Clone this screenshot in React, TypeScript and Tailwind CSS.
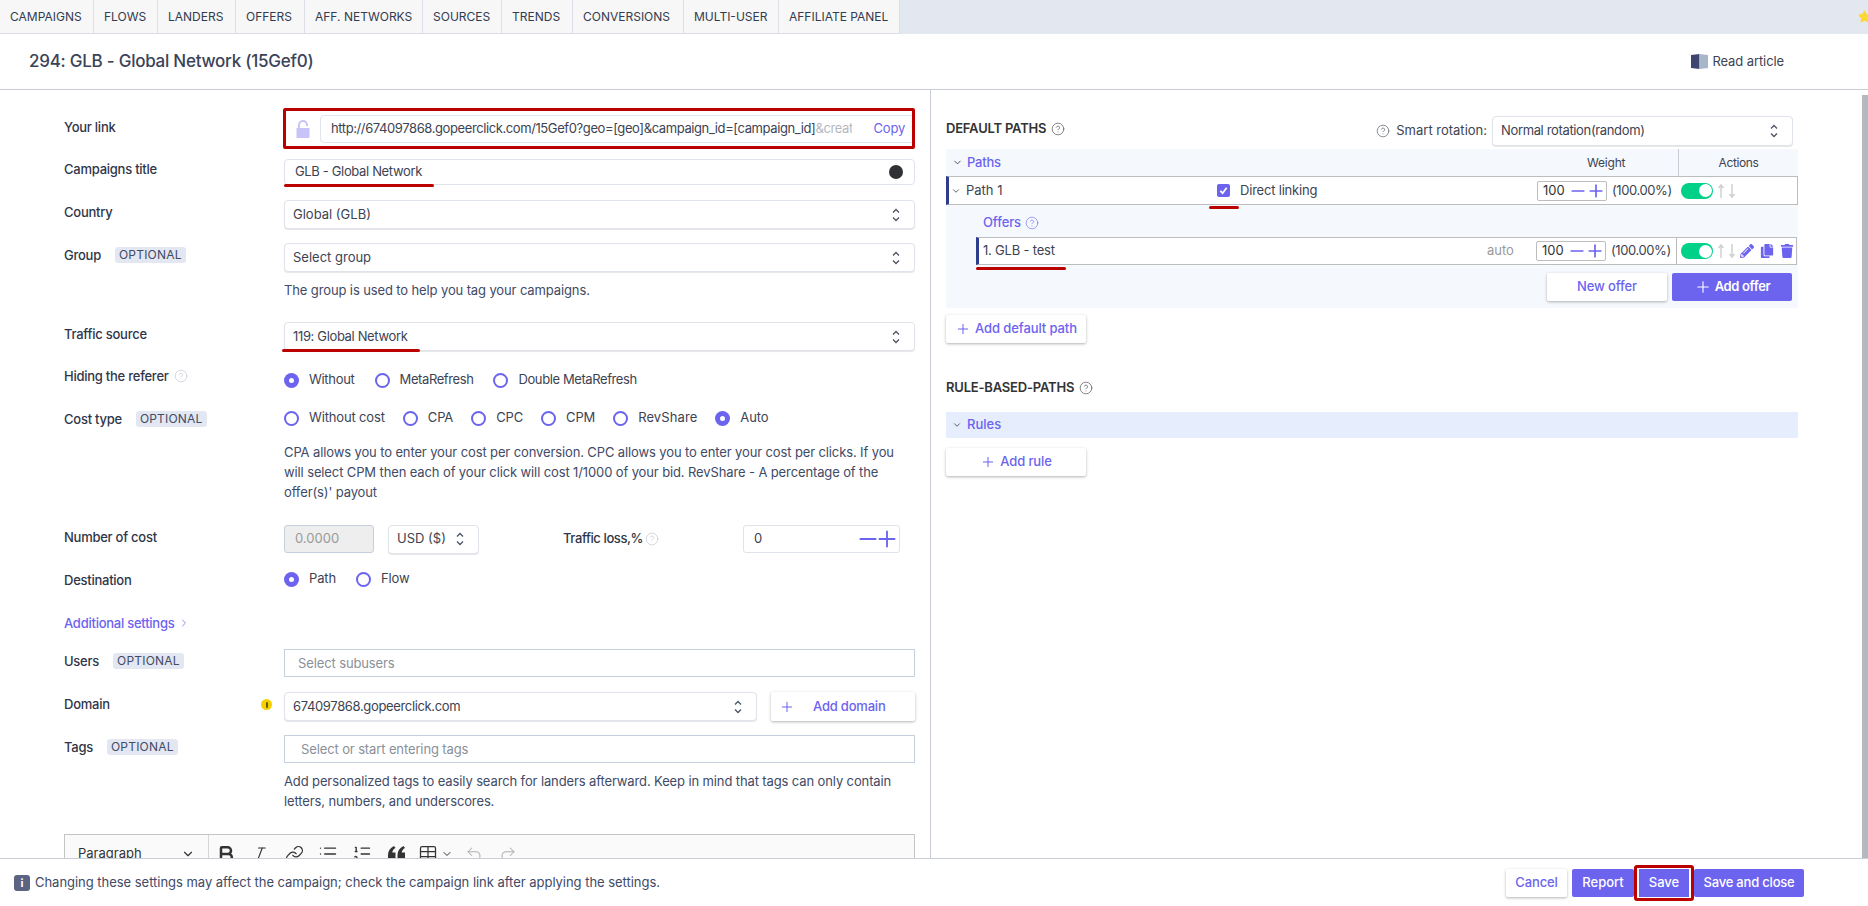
import React from "react";
import {
  Bold,
  ChevronDown,
  ChevronRight,
  CircleHelp,
  Italic,
  Link,
  List,
  ListOrdered,
  Plus,
  Minus,
  Redo2,
  Table,
  Undo2,
} from "lucide-react";
import { FaCopy, FaPencilAlt, FaStar, FaTrash } from "react-icons/fa";

const tabs = [
  ["CAMPAIGNS", "w-[94px]"],
  ["FLOWS", "w-[64px]"],
  ["LANDERS", "w-[78px]"],
  ["OFFERS", "w-[69px]"],
  ["AFF. NETWORKS", "w-[118px]"],
  ["SOURCES", "w-[79px]"],
  ["TRENDS", "w-[71px]"],
  ["CONVERSIONS", "w-[111px]"],
  ["MULTI-USER", "w-[95px]"],
  ["AFFILIATE PANEL", "w-[121px]"],
];

function UpDown() {
  return (
    <svg width="10" height="16" viewBox="0 0 10 16" fill="none" stroke="#4b5563" strokeWidth="1.3" className="shrink-0">
      <path d="M2 5.5 5 2.5 8 5.5" />
      <path d="M2 10.5 5 13.5 8 10.5" />
    </svg>
  );
}

function Optional() {
  return (
    <span className="bg-[#e3e7f1] text-[#414a66] text-[12px] leading-[16px] rounded-[3px] px-[4px] tracking-[0.2px] font-normal">
      OPTIONAL
    </span>
  );
}

function Row({ label, badge, help, children, className, labelClass }: { label: string; badge?: boolean; help?: boolean; children: React.ReactNode; className?: string; labelClass?: string }) {
  return (
    <div className={"flex items-start " + (className ?? "")}>
      <div className={"w-[220px] shrink-0 flex items-center gap-[14px] text-[13px] leading-[20px] text-[#2f3648] font-medium tracking-[-0.25px] " + (labelClass ?? "mt-[2px]")}>
        <span>{label}</span>
        {badge && <Optional />}
        {help && <CircleHelp size={14} strokeWidth={1} className="text-[#b9bec9] -ml-[9px]" />}
      </div>
      <div className="flex-1 min-w-0">{children}</div>
    </div>
  );
}

function Select({ text, className, tight }: { text: string; className?: string; tight?: boolean }) {
  return (
    <div className={"h-[29px] border border-[#dfe3ea] rounded-[4px] shadow-[0_1px_1px_rgba(0,0,0,0.1)] bg-white flex items-center justify-between pl-[8px] pr-[13px] text-[13px] text-[#3d4352] " + (className ?? "")}>
      <span className={tight ? "tracking-[-0.35px]" : ""}>{text}</span>
      <UpDown />
    </div>
  );
}

function Radio({ label, on, spacing }: { label: string; on?: boolean; spacing?: string }) {
  return (
    <div className="flex items-center gap-[10px] text-[13px] text-[#3d4352]">
      <span className={on ? "w-[15px] h-[15px] rounded-full bg-[#6c63ef] flex items-center justify-center" : "w-[15px] h-[15px] rounded-full border-2 border-[#6c63ef] bg-white"}>
        {on && <span className="w-[5px] h-[5px] rounded-full bg-white" />}
      </span>
      <span className={spacing ?? "tracking-[-0.15px]"}>{label}</span>
    </div>
  );
}

function Stepper({ value }: { value: string }) {
  return (
    <div className="w-[70px] h-[20px] border border-[#bdbdbd] rounded-[2px] bg-white flex items-center pl-[5px] text-[13px] text-[#333]">
      <span className="flex-1">{value}</span>
      <Minus size={20} strokeWidth={2} className="text-[#6c63ef]" />
      <Plus size={20} strokeWidth={2} className="text-[#6c63ef] -ml-[2px]" />
    </div>
  );
}

function Toggle() {
  return (
    <span className="w-[32px] h-[16px] rounded-full bg-[#00d188] flex items-center justify-end pr-[1px] shrink-0">
      <span className="w-[13px] h-[13px] rounded-full bg-white" />
    </span>
  );
}

function Arrows() {
  return (
    <span className="flex items-center ml-[4px] gap-[3px] shrink-0">
      <svg width="8" height="16" viewBox="0 0 8 16" fill="none" stroke="#cfd1d4" strokeWidth="1.5">
        <path d="M4 15V2M1.5 5 4 2 6.500 5" />
      </svg>
      <svg width="8" height="16" viewBox="0 0 8 16" fill="none" stroke="#cfd1d4" strokeWidth="1.5">
        <path d="M4 1V14M1.500 11 4 14 6.500 11" />
      </svg>
    </span>
  );
}

function OutlineButton({ children, className }: { children: React.ReactNode; className?: string }) {
  return (
    <button className={"h-[28px] bg-white rounded-[2px] shadow-[0_1px_3px_rgba(0,0,0,0.3)] flex items-center justify-center text-[13px] font-medium text-[#6c63ef] tracking-[-0.1px] " + (className ?? "")}>
      {children}
    </button>
  );
}

export default function App() {
  return (
    <div className="h-[906px] w-[1868px] overflow-hidden flex flex-col bg-white font-['Inter',sans-serif] relative">
      {/* top nav */}
      <div className="h-[34px] shrink-0 bg-[#e2e7f0] flex relative">
        {tabs.map(([name, w]) => (
          <div key={name} className={w + " h-[34px] bg-[#f7f7f7] border-r border-b border-[#dcdfe5] flex items-center pl-[10px] text-[12px] text-[#333b4f] whitespace-nowrap"}>
            {name}
          </div>
        ))}
        <FaStar size={13} className="absolute right-[-3px] top-[10px] text-[#fdd835]" />
      </div>

      {/* title */}
      <div className="h-[56px] shrink-0 border-b border-[#c9ced6] flex items-center justify-between pl-[29px] pr-[84px]">
        <h1 className="text-[17px] font-medium text-[#3a4358] tracking-[-0.25px]">294: GLB - Global Network (15Gef0)</h1>
        <div className="flex items-center gap-[4px] text-[13px] text-[#3d4352] tracking-[-0.1px]">
          <svg width="17" height="15" viewBox="0 0 17 15">
            <path d="M0 1 8.5 0V15L0 14Z" fill="#3f4571" />
            <path d="M8.5 0 17 1V14L8.5 15Z" fill="#a9b5c8" />
          </svg>
          Read article
        </div>
      </div>

      {/* body */}
      <div className="flex-1 min-h-0 flex">
        <div className="w-[930px] shrink-0 overflow-hidden pl-[64px] pr-[15px] pt-[18px]">
          <Row label="Your link" className="mb-[10px]" labelClass="mt-[9px]">
            <div className="h-[41px] flex items-center relative pl-[12px]">
              <svg width="14" height="18" viewBox="0 0 14 18" className="shrink-0">
                <path d="M3 8V5a4 4 0 0 1 8 0v1" fill="none" stroke="#c7c4fa" strokeWidth="2" />
                <rect x="0.5" y="8" width="13" height="10" fill="#c7c4fa" />
              </svg>
              <div className="ml-[10px] flex-1 h-[28px] border border-[#dfe6ef] rounded-[4px] flex items-center pl-[10px] pr-[9px] text-[13px] text-[#3d4352] overflow-hidden">
                <span className="whitespace-nowrap w-[521px] overflow-hidden tracking-[-0.4px]">http://674097868.gopeerclick.com/15Gef0?geo=[geo]&amp;campaign_id=[campaign_id]<span className="text-[#b5b8bf]">&amp;creat</span></span>
                <span className="ml-auto text-[#6c63ef] tracking-[-0.2px]">Copy</span>
              </div>
              <div className="absolute -left-[1px] right-0 top-0 bottom-0 border-[3px] border-[#bb0000] rounded-[2px]" />
            </div>
          </Row>
          <Row label="Campaigns title" className="mb-[15px]" labelClass="mt-0">
            <div className="h-[26px] border border-[#dfe3ea] rounded-[4px] flex items-center justify-between pl-[10px] pr-[11px] text-[13px] text-[#3d4352] relative">
              <span className="tracking-[-0.35px]">GLB - Global Network</span>
              <span className="w-[14px] h-[14px] rounded-full bg-[#2f3136]" />
              <span className="absolute -left-[1px] -bottom-[3px] w-[150px] h-[3px] rounded-full bg-[#bb0000]" />
            </div>
          </Row>
          <Row label="Country" className="mb-[14px]">
            <Select text="Global (GLB)" />
          </Row>
          <Row label="Group" badge className="mb-[22px]">
            <Select text="Select group" />
            <p className="text-[13px] leading-[20px] text-[#414a66] mt-[8px] tracking-[-0.12px]">The group is used to help you tag your campaigns.</p>
          </Row>
          <Row label="Traffic source" className="mb-[19px]">
            <div className="relative">
              <Select text="119: Global Network" tight />
              <span className="absolute -left-[2px] -bottom-[1px] w-[138px] h-[3px] rounded-full bg-[#bb0000]" />
            </div>
          </Row>
          <Row label="Hiding the referer" help className="mb-[18px]" labelClass="-mt-[4px]">
            <div className="flex gap-[20px] h-[20px] items-center">
              <Radio label="Without" on spacing="tracking-[-0.3px]" />
              <Radio label="MetaRefresh" spacing="tracking-[-0.4px]" />
              <Radio label="Double MetaRefresh" spacing="tracking-[-0.4px]" />
            </div>
          </Row>
          <Row label="Cost type" badge className="mb-[23px]" labelClass="mt-[1px]">
            <div className="flex gap-[18px] h-[20px] items-center">
              <Radio label="Without cost" on={false} />
              <Radio label="CPA" />
              <Radio label="CPC" />
              <Radio label="CPM" />
              <Radio label="RevShare" spacing="tracking-[0.1px]" />
              <Radio label="Auto" on />
            </div>
            <p className="text-[13px] leading-[20px] text-[#414a66] mt-[14px] tracking-[-0.12px]">
              CPA allows you to enter your cost per conversion. CPC allows you to enter your cost per clicks. If you will select CPM then each of your click will cost 1/1000 of your bid. RevShare - A percentage of the offer(s)' payout
            </p>
          </Row>
          <Row label="Number of cost" className="mb-[16px]">
            <div className="flex items-center h-[28px]">
              <div className="w-[90px] h-[28px] bg-[#eeeeee] border border-[#c5d0df] rounded-[3px] flex items-center pl-[10px] text-[13px] text-[#9a9a9a]">0.0000</div>
              <Select text="USD ($)" className="w-[91px] ml-[14px] pr-[5px]" />
              <span className="ml-[84px] w-[81px] whitespace-nowrap text-[13px] font-medium text-[#2f3648] tracking-[-0.4px]">Traffic loss,%</span>
              <CircleHelp size={14} strokeWidth={1} className="text-[#b9bec9] ml-[1px]" />
              <div className="w-[157px] h-[28px] ml-[84px] border border-[#dfe3ea] rounded-[3px] flex items-center pl-[10px] text-[13px] text-[#3d4352]">
                <span className="flex-1">0</span>
                <Minus size={26} strokeWidth={1.7} className="text-[#6c63ef] -mr-[7px]" />
                <Plus size={26} strokeWidth={1.7} className="text-[#6c63ef] -mr-[1px]" />
              </div>
            </div>
          </Row>
          <Row label="Destination" className="mb-[23px]" labelClass="mt-[1px]">
            <div className="flex gap-[20px] h-[20px] items-center">
              <Radio label="Path" on />
              <Radio label="Flow" />
            </div>
          </Row>
          <div className="flex items-center gap-[3px] text-[13px] leading-[20px] text-[#6c63ef] font-medium tracking-[-0.25px] mb-[16px]">
            Additional settings <ChevronRight size={12} strokeWidth={1.5} />
          </div>
          <Row label="Users" badge className="mb-[15px]">
            <div className="h-[28px] border border-[#c5d0df] flex items-center pl-[13px] pt-[1px] text-[13px] text-[#8a8f99] tracking-[-0.12px]">Select subusers</div>
          </Row>
          <Row label="Domain" className="mb-[14px] relative" labelClass="mt-[2px]">
            <span className="absolute left-[197px] top-[7px] w-[11px] h-[11px] rounded-full bg-[#f5d000] flex items-center justify-center">
              <span className="w-[2px] h-[6px] rounded-full bg-[#6b5c00]" />
            </span>
            <div className="flex gap-[14px]">
              <Select text="674097868.gopeerclick.com" className="flex-1" tight />
              <OutlineButton className="w-[144px] h-[29px] justify-start pl-[8px] shadow-[0_1px_2px_rgba(0,0,0,0.2)]">
                <Plus size={16} strokeWidth={1.5} />
                <span className="ml-[18px] tracking-[-0.2px]">Add domain</span>
              </OutlineButton>
            </div>
          </Row>
          <Row label="Tags" badge className="mb-[23px]">
            <div className="h-[28px] border border-[#c5d0df] flex items-center pl-[16px] pt-[1px] text-[13px] text-[#8a8f99] tracking-[-0.12px]">Select or start entering tags</div>
            <p className="text-[13px] leading-[20px] text-[#414a66] mt-[8px] tracking-[-0.12px]">
              Add personalized tags to easily search for landers afterward. Keep in mind that tags can only contain letters, numbers, and underscores.
            </p>
          </Row>
          <div className="h-[40px] border border-[#c4c4c4] bg-[#fafafa] flex items-center text-[#333]">
            <div className="w-[144px] h-full border-r border-[#d6d6d6] flex items-center justify-between pl-[13px] pr-[13px] text-[13px]">
              Paragraph <ChevronDown size={14} />
            </div>
            <div className="flex items-center">
              <span className="w-[34px] flex justify-center"><Bold size={20} strokeWidth={3} /></span>
              <span className="w-[34px] flex justify-center"><Italic size={18} strokeWidth={1.5} /></span>
              <span className="w-[34px] flex justify-center"><Link size={19} strokeWidth={1.6} /></span>
              <span className="w-[34px] flex justify-center"><List size={20} strokeWidth={1.6} /></span>
              <span className="w-[34px] flex justify-center"><ListOrdered size={20} strokeWidth={1.6} /></span>
              <span className="w-[34px] flex justify-center">
                <svg width="17" height="16" viewBox="0 0 17 16" fill="currentColor">
                  <path d="M0 15V9C0 5 2 2 6 0L7.5 2C5.5 3 4.5 4.5 4.3 6.5H7.5V15Z" />
                  <path d="M9.5 15V9C9.5 5 11.500 2 15.500 0L17 2C15 3 14 4.500 13.800 6.500H17V15Z" />
                </svg>
              </span>
              <span className="w-[44px] flex items-center justify-center gap-[3px]">
                <Table size={20} strokeWidth={1.5} />
                <ChevronDown size={12} />
              </span>
              <span className="w-[34px] flex justify-center"><Undo2 size={18} strokeWidth={1.4} className="text-[#b0b0b0]" /></span>
              <span className="w-[34px] flex justify-center"><Redo2 size={18} strokeWidth={1.4} className="text-[#b0b0b0]" /></span>
            </div>
          </div>
        </div>

        {/* right */}
        <div className="flex-1 min-w-0 border-l border-[#c9ced6] pl-[15px] pr-[70px] pt-[26px] relative overflow-hidden">
          <div className="absolute right-0 top-[5px] w-[6px] bottom-0 bg-[#b3b9bf]" />
          <div className="flex items-center justify-between h-[30px] pr-[5px]">
            <div className="flex items-center gap-[5px] text-[13px] font-semibold text-[#333] -mt-[4px] tracking-[-0.2px]">
              DEFAULT PATHS <CircleHelp size={14} strokeWidth={1} />
            </div>
            <div className="flex items-center gap-[4px] text-[13px] text-[#3d4352]">
              <CircleHelp size={14} strokeWidth={1} className="mr-[2px]" />
              Smart rotation:
              <Select text="Normal rotation(random)" tight className="w-[301px] h-[30px] ml-[1px]" />
            </div>
          </div>
          <div className="bg-[#f5f8fc] mt-[3px] h-[159px]">
            <div className="h-[27px] flex items-center text-[12px] text-[#3d4352] tracking-[-0.2px]">
              <ChevronDown size={11} className="ml-[6px]" />
              <span className="ml-[4px] flex-1 text-[13px] font-medium text-[#6c63ef]">Paths</span>
              <span className="w-[91px]">Weight</span>
              <span className="w-[120px] h-full border-l border-[#c9ced6] flex items-center justify-center tracking-[-0.4px]">Actions</span>
            </div>
            <div className="h-[29px] bg-white border-y border-[#bdbdbd] border-r border-l-[3px] border-l-[#2f3e8c] flex items-center text-[13px] text-[#3d4352] relative">
              <ChevronDown size={10} className="ml-[2px]" />
              <span className="ml-[5px] w-[251px]">Path 1</span>
              <span className="w-[13px] h-[13px] rounded-[2px] bg-[#6c63ef] flex items-center justify-center">
                <svg width="9" height="9" viewBox="0 0 10 10" fill="none" stroke="white" strokeWidth="2"><path d="M1.5 5.500 4 8 8.500 2" /></svg>
              </span>
              <span className="ml-[10px] pt-[1px] w-[297px] tracking-[-0.2px]">Direct linking</span>
              <Stepper value="100" />
              <span className="ml-[5px] w-[69px] tracking-[-0.4px]">(100.00%)</span>
              <Toggle />
              <Arrows />
              <span className="absolute left-[260px] -bottom-[5px] w-[30px] h-[3px] rounded-full bg-[#bb0000]" />
            </div>
            <div className="flex items-center gap-[4px] h-[32px] pt-[3px] pl-[37px] text-[13px] font-medium text-[#6c63ef] tracking-[-0.1px]">
              Offers <CircleHelp size={14} strokeWidth={1} />
            </div>
            <div className="h-[28px] ml-[30px] mr-[1px] bg-white border-y border-[#bdbdbd] border-r border-l-[3px] border-l-[#2f3e8c] flex items-center text-[13px] text-[#3d4352] relative">
              <span className="ml-[4px] flex-1 tracking-[-0.2px]">1. GLB - test</span>
              <span className="text-[#9a9a9a] w-[49px]">auto</span>
              <Stepper value="100" />
              <span className="ml-[5px] w-[65px] tracking-[-0.4px]">(100.00%)</span>
              <span className="h-full border-l border-[#bdbdbd] flex items-center pl-[4px] w-[120px]">
                <Toggle />
                <Arrows />
                <span className="flex items-center gap-[6px] ml-[4px] text-[#6c63ef]">
                  <FaPencilAlt size={14} />
                  <FaCopy size={14} />
                  <FaTrash size={14} />
                </span>
              </span>
              <span className="absolute -left-[3px] -bottom-[6px] w-[90px] h-[3px] rounded-full bg-[#bb0000]" />
            </div>
            <div className="flex justify-end gap-[5px] mt-[8px] pr-[6px]">
              <OutlineButton className="w-[120px]">New offer</OutlineButton>
              <button className="w-[120px] h-[28px] bg-[#6c63ef] rounded-[2px] text-white text-[13px] font-semibold flex items-center justify-center gap-[3px] tracking-[-0.35px]">
                <Plus size={18} strokeWidth={1.5} /> Add offer
              </button>
            </div>
          </div>
          <OutlineButton className="w-[140px] mt-[7px] gap-[4px]">
            <Plus size={16} strokeWidth={1.5} /> Add default path
          </OutlineButton>
          <div className="flex items-center gap-[5px] text-[13px] font-semibold text-[#333] mt-[35px] h-[20px] tracking-[-0.2px]">
            RULE-BASED-PATHS <CircleHelp size={14} strokeWidth={1} />
          </div>
          <div className="h-[26px] bg-[#e6edfd] mt-[14px] flex items-center text-[13px] font-medium text-[#6c63ef]">
            <ChevronDown size={10} className="ml-[6px] text-[#3d4352]" />
            <span className="ml-[5px]">Rules</span>
          </div>
          <OutlineButton className="w-[140px] mt-[10px] gap-[4px]">
            <Plus size={16} strokeWidth={1.5} /> Add rule
          </OutlineButton>
        </div>
      </div>

      {/* footer */}
      <div className="h-[48px] shrink-0 border-t border-[#c9ced6] bg-white flex items-center justify-between pl-[14px] pr-[64px]">
        <div className="flex items-center gap-[5px] text-[13px] text-[#414a66] tracking-[-0.03px]">
          <span className="w-[16px] h-[16px] rounded-[3px] bg-[#5c6484] text-white text-[11px] leading-[16px] font-bold text-center">i</span>
          Changing these settings may affect the campaign; check the campaign link after applying the settings.
        </div>
        <div className="flex items-center">
          <OutlineButton className="w-[61px]">Cancel</OutlineButton>
          <button className="w-[62px] ml-[5px] h-[28px] bg-[#6c63ef] rounded-[2px] text-white text-[13px] font-medium">Report</button>
          <div className="relative w-[60px] h-[28px] flex justify-center">
            <button className="w-[50px] h-[28px] bg-[#6c63ef] text-white text-[13px] font-medium">Save</button>
            <span className="absolute left-0 right-0 -top-[4px] -bottom-[4px] border-[3px] border-[#bb0000] rounded-[3px]" />
          </div>
          <button className="w-[110px] h-[28px] bg-[#6c63ef] rounded-[2px] text-white text-[13px] font-medium tracking-[-0.2px]">Save and close</button>
        </div>
      </div>
    </div>
  );
}
